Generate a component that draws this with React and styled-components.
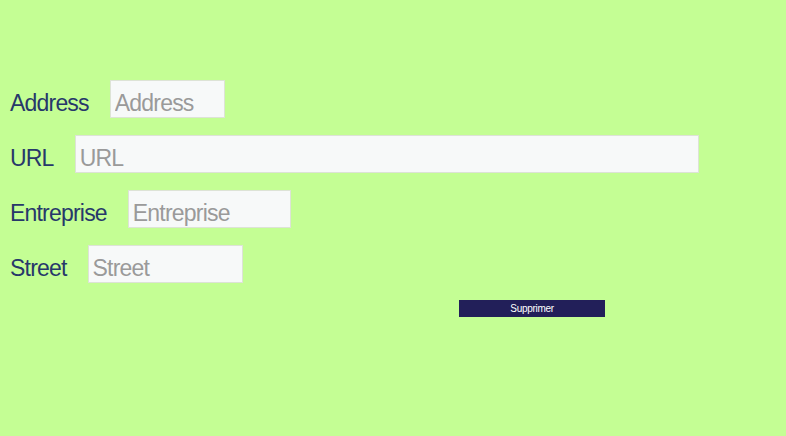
import React from 'react';
import styled, { createGlobalStyle } from 'styled-components';

const GlobalStyle = createGlobalStyle`
  html, body {
    margin: 0;
    padding: 0;
    background: #c4fe94;
    font-family: "Liberation Sans", Arial, sans-serif;
  }
`;

const Page = styled.div`
  width: 786px;
  height: 436px;
  background: #c4fe94;
  padding: 80px 0 0 10px;
  box-sizing: border-box;
`;

const Form = styled.form`
  display: flex;
  flex-direction: column;
  gap: 17px;
`;

const Row = styled.div`
  display: flex;
  align-items: baseline;
  gap: 21px;
`;

const Label = styled.label`
  font-size: 23px;
  letter-spacing: -0.8px;
  color: #27386a;
`;

const Field = styled.input`
  width: ${p => p.$w}px;
  height: 38px;
  box-sizing: border-box;
  padding: 8px 4px 0 4px;
  border: 1px solid #dde3d6;
  background: #f7f9f9;
  font-family: "Liberation Sans", Arial, sans-serif;
  font-size: 23px;
  letter-spacing: -0.8px;
  color: #333;
  outline: none;
  &::placeholder {
    color: #9a9a9a;
  }
`;

const Delete = styled.button`
  margin: 0 0 0 449px;
  width: 146px;
  height: 17px;
  padding: 0;
  border: none;
  background: #221f59;
  color: #ffffff;
  font-family: "Liberation Sans", Arial, sans-serif;
  font-size: 10px;
  letter-spacing: -0.3px;
  cursor: pointer;
`;

const fields = [
  { name: 'Address', w: 115 },
  { name: 'URL', w: 624 },
  { name: 'Entreprise', w: 163 },
  { name: 'Street', w: 155 },
];

export default function App() {
  return (
    <Page>
      <GlobalStyle />
      <Form onSubmit={e => e.preventDefault()}>
        {fields.map(f => (
          <Row key={f.name}>
            <Label>{f.name}</Label>
            <Field $w={f.w} placeholder={f.name} />
          </Row>
        ))}
        <Delete type="button">Supprimer</Delete>
      </Form>
    </Page>
  );
}
